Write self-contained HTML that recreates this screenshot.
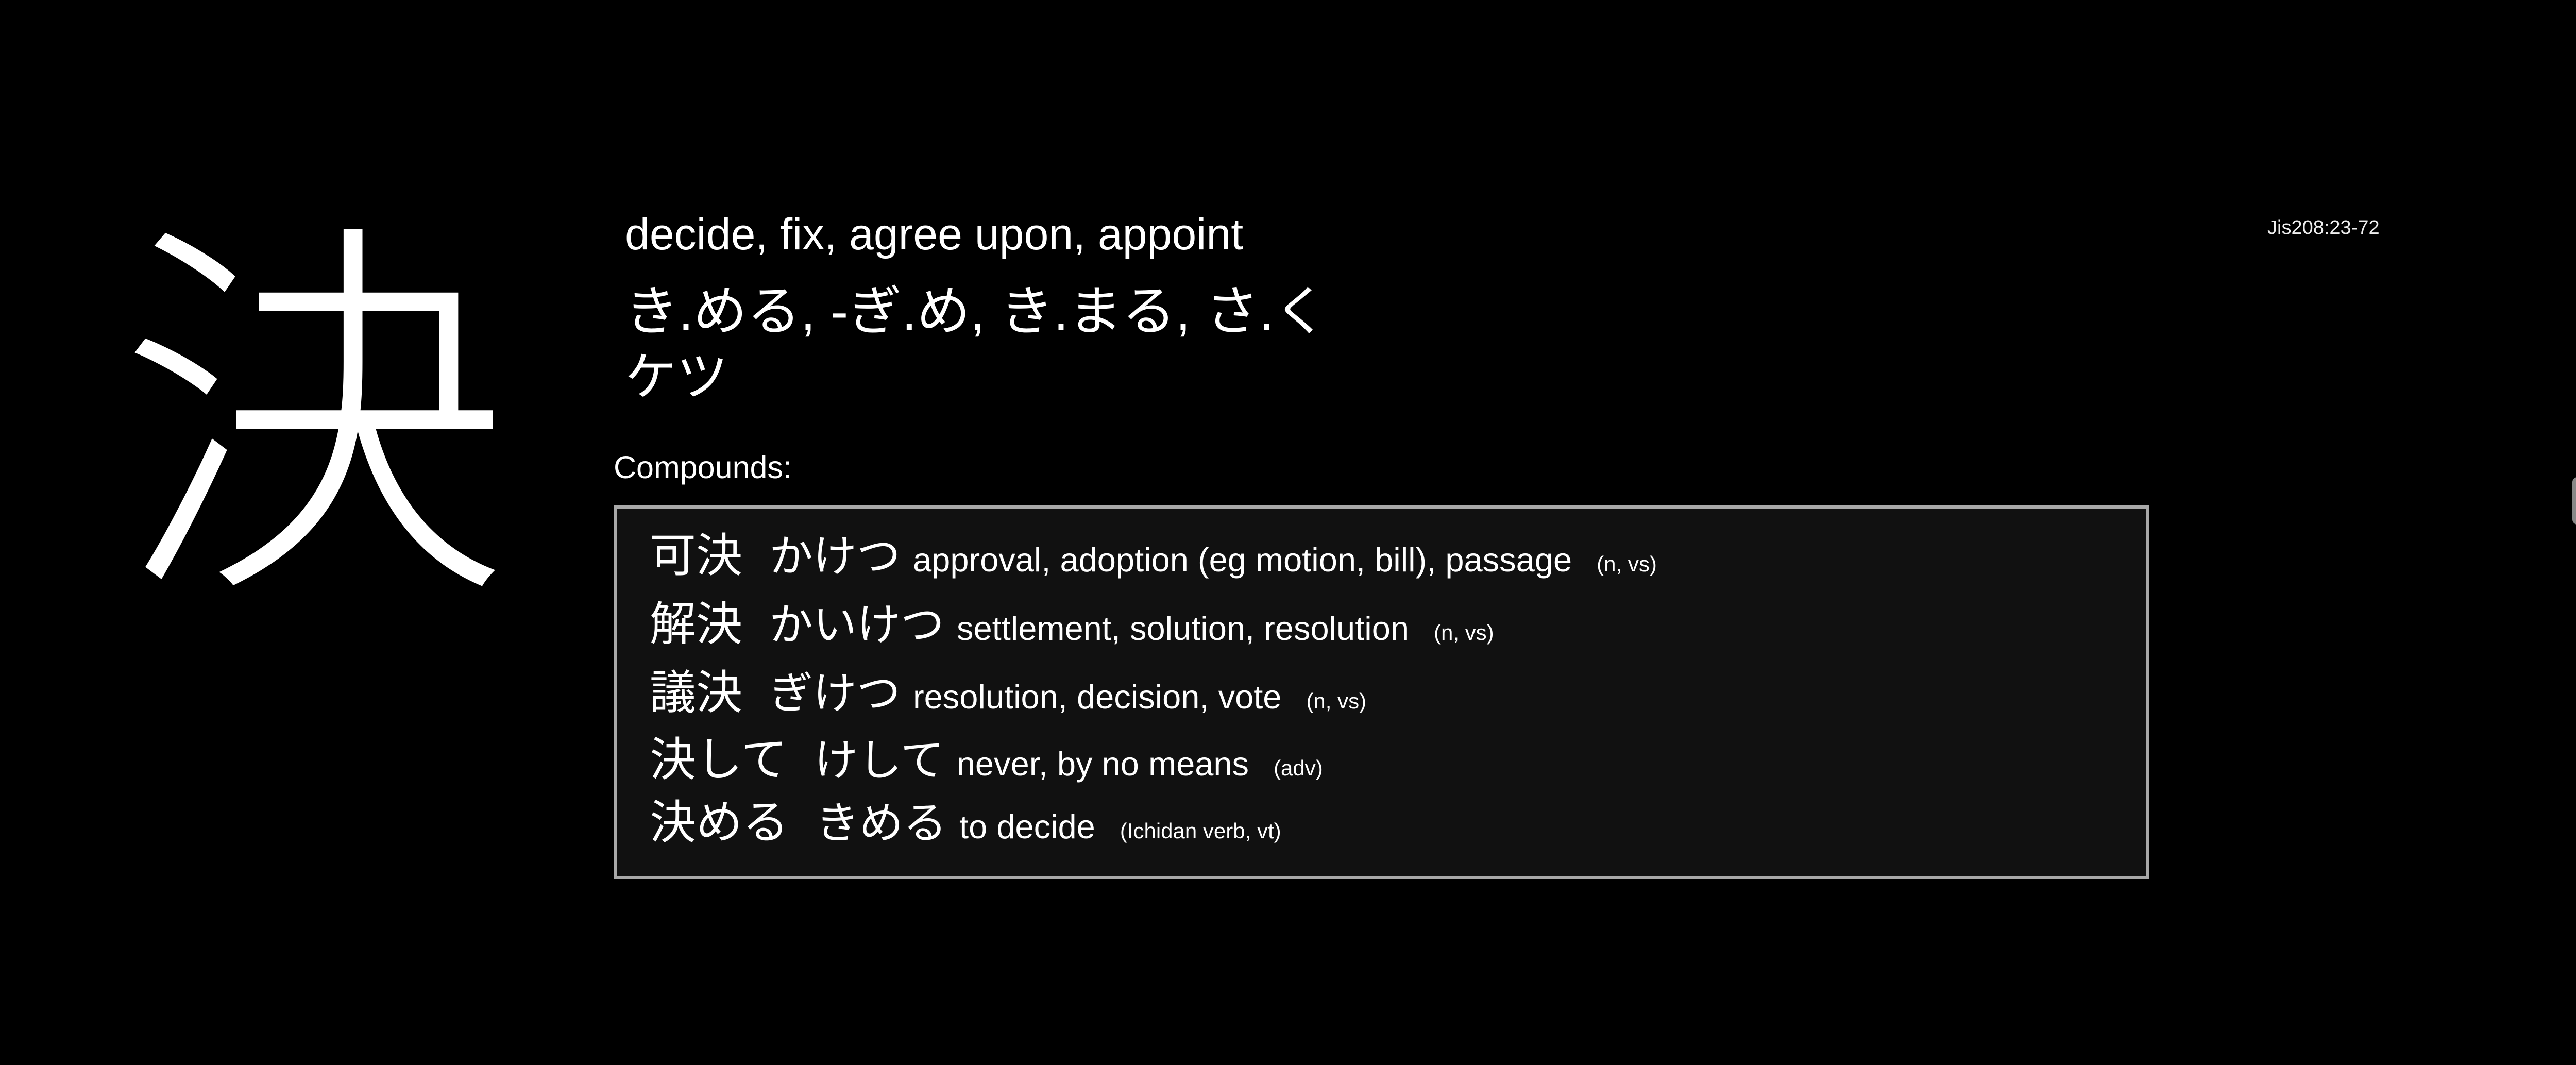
<!DOCTYPE html>
<html><head><meta charset="utf-8">
<style>
html,body{margin:0;padding:0;background:#000;}
body{width:5008px;height:2067px;position:relative;overflow:hidden;color:#fff;font-family:"Liberation Sans","Noto Sans CJK JP",sans-serif;}
.abs{position:absolute;white-space:nowrap;}
#kanji{left:228px;top:318px;font-size:762px;line-height:860px;font-family:"Noto Sans CJK JP",sans-serif;font-weight:300;}
#mean{left:1213px;top:405px;font-size:86px;line-height:100px;}
#kun{left:1213px;top:545px;font-size:104px;line-height:120px;}
#on{left:1213px;top:672px;font-size:100px;line-height:120px;}
#comp{left:1191px;top:872px;font-size:61px;line-height:70px;}
#jis{left:4401px;top:420px;font-size:38px;line-height:44px;color:#eee;}
#box{position:absolute;left:1191px;top:981px;width:2968px;height:713px;border:6px solid #a8a8a8;background:#111;}
.row{position:absolute;left:64px;height:131px;display:flex;align-items:baseline;white-space:nowrap;}
.k{font-size:90px;margin-right:52px;}
.r{font-size:85px;margin-right:24px;}
.e{font-size:65px;margin-right:48px;}
.t{font-size:42px;}
#sb{position:absolute;left:4993px;top:926px;width:20px;height:92px;border-radius:10px;background:#888;}
</style></head><body>
<div id="kanji" class="abs">決</div>
<div id="mean" class="abs">decide, fix, agree upon, appoint</div>
<div id="kun" class="abs">き.める, -ぎ.め, き.まる, さ.く</div>
<div id="on" class="abs">ケツ</div>
<div id="comp" class="abs">Compounds:</div>
<div id="jis" class="abs">Jis208:23-72</div>
<div id="box">
<div class="row" style="top:18px"><span class="k">可決</span><span class="r">かけつ</span><span class="e">approval, adoption (eg motion, bill), passage</span><span class="t">(n, vs)</span></div>
<div class="row" style="top:151px"><span class="k">解決</span><span class="r">かいけつ</span><span class="e">settlement, solution, resolution</span><span class="t">(n, vs)</span></div>
<div class="row" style="top:284px"><span class="k">議決</span><span class="r">ぎけつ</span><span class="e">resolution, decision, vote</span><span class="t">(n, vs)</span></div>
<div class="row" style="top:414px"><span class="k">決して</span><span class="r">けして</span><span class="e">never, by no means</span><span class="t">(adv)</span></div>
<div class="row" style="top:536px"><span class="k">決める</span><span class="r">きめる</span><span class="e">to decide</span><span class="t">(Ichidan verb, vt)</span></div>
</div>
<div id="sb"></div>
</body></html>
